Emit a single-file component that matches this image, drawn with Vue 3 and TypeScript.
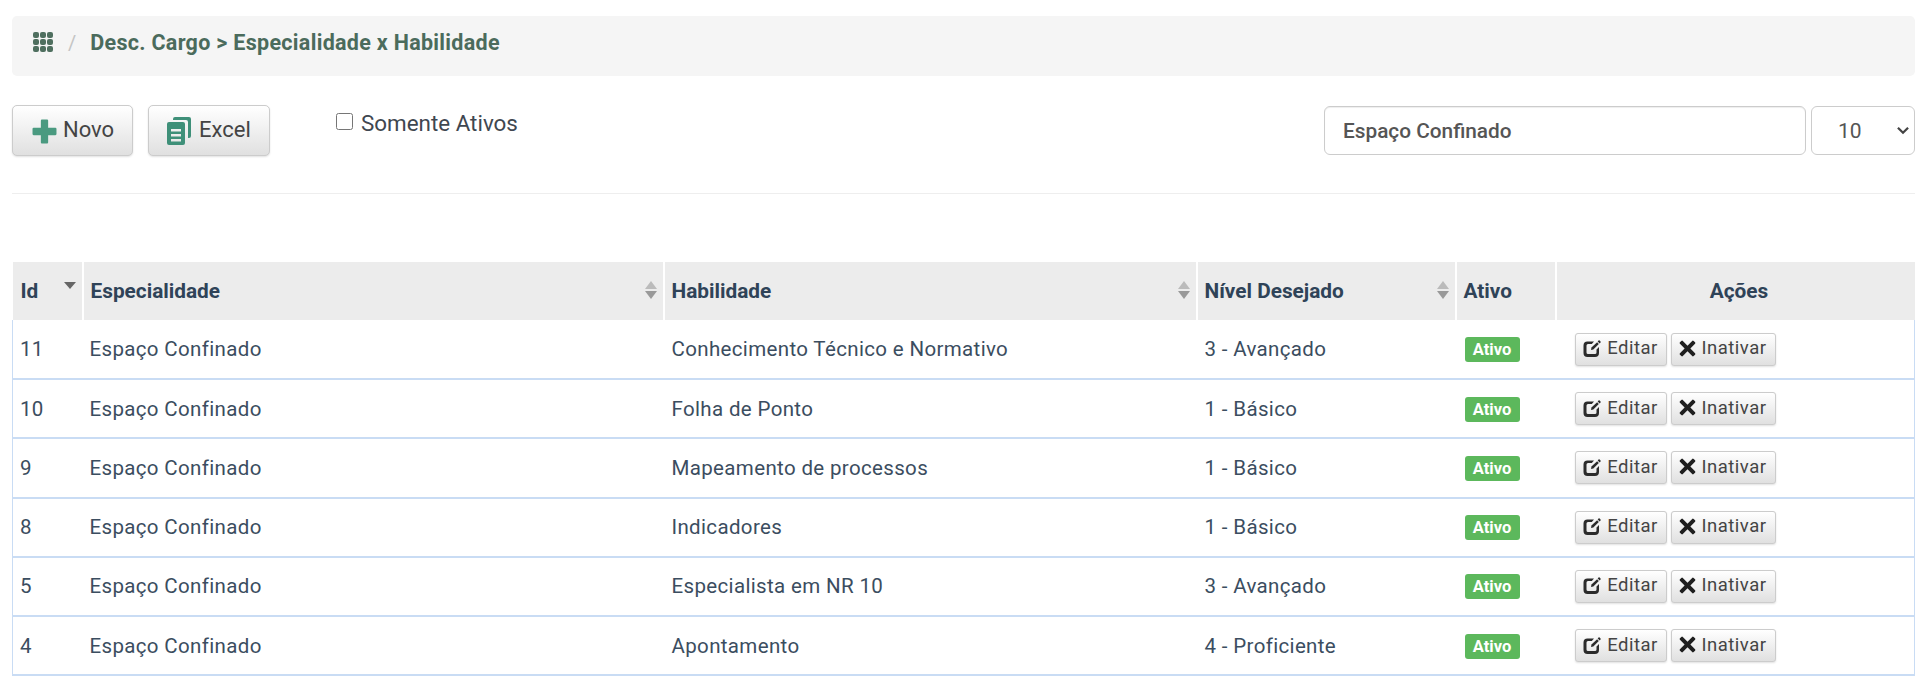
<script setup lang="ts">
interface Row { id: number; esp: string; hab: string; nivel: string }
const rows: Row[] = [
  { id: 11, esp: 'Espaço Confinado', hab: 'Conhecimento Técnico e Normativo', nivel: '3 - Avançado' },
  { id: 10, esp: 'Espaço Confinado', hab: 'Folha de Ponto', nivel: '1 - Básico' },
  { id: 9, esp: 'Espaço Confinado', hab: 'Mapeamento de processos', nivel: '1 - Básico' },
  { id: 8, esp: 'Espaço Confinado', hab: 'Indicadores', nivel: '1 - Básico' },
  { id: 5, esp: 'Espaço Confinado', hab: 'Especialista em NR 10', nivel: '3 - Avançado' },
  { id: 4, esp: 'Espaço Confinado', hab: 'Apontamento', nivel: '4 - Proficiente' },
]
const sortable = [
  { label: 'Especialidade', cls: 'c-esp' },
  { label: 'Habilidade', cls: 'c-hab' },
  { label: 'Nível Desejado', cls: 'c-niv' },
]
const grid = [0, 1, 2].flatMap((y) => [0, 1, 2].map((x) => ({ x: x * 7, y: y * 7 })))
</script>

<template>
  <div class="page">
    <div class="crumb">
      <svg class="th" viewBox="0 0 20 20" aria-hidden="true">
        <rect v-for="(g, i) in grid" :key="i" :x="g.x" :y="g.y" width="6" height="6" rx="2" />
      </svg>
      <span class="sep">/</span>
      <span class="crumb-text">Desc. Cargo &gt; Especialidade x Habilidade</span>
    </div>

    <div class="toolbar">
      <button class="btn btn-main" type="button">
        <svg class="ico-plus" viewBox="0 0 24 24" aria-hidden="true">
          <path d="M8.5 1.5a1 1 0 0 1 1-1h5a1 1 0 0 1 1 1v7h7a1 1 0 0 1 1 1v5a1 1 0 0 1-1 1h-7v7a1 1 0 0 1-1 1h-5a1 1 0 0 1-1-1v-7h-7a1 1 0 0 1-1-1v-5a1 1 0 0 1 1-1h7z" />
        </svg>
        Novo
      </button>
      <button class="btn btn-main btn-excel" type="button">
        <svg class="ico-copy" viewBox="0 0 24 28" aria-hidden="true">
          <path d="M8 0h14a2 2 0 0 1 2 2v17a2 2 0 0 1-2 2h-1V5a2 2 0 0 0-2-2H6V2a2 2 0 0 1 2-2z" />
          <path fill-rule="evenodd" d="M2 5h14a2 2 0 0 1 2 2v19a2 2 0 0 1-2 2H2a2 2 0 0 1-2-2V7a2 2 0 0 1 2-2zm2 7v2.5h10V12zm0 5v2.5h10V17zm0 5v2.5h10V22z" />
        </svg>
        Excel
      </button>
      <label class="check">
        <input type="checkbox" />
        <span>Somente Ativos</span>
      </label>
      <div class="filters">
        <input class="search" type="text" value="Espaço Confinado" />
        <div class="size-wrap">
          <select class="size">
            <option>10</option>
            <option>25</option>
            <option>50</option>
          </select>
          <svg class="chev" viewBox="0 0 12 8" aria-hidden="true">
            <path d="M1.500 1.500 6 6l4.500-4.500" />
          </svg>
        </div>
      </div>
    </div>

    <hr class="rule" />

    <table class="grid">
      <thead>
        <tr>
          <th class="c-id">Id<span class="caret"></span></th>
          <th v-for="s in sortable" :key="s.label" :class="s.cls">
            {{ s.label }}
            <span class="sorter"><i class="up"></i><i class="down"></i></span>
          </th>
          <th class="c-ativo">Ativo</th>
          <th class="c-acoes">Ações</th>
        </tr>
      </thead>
      <tbody>
        <tr v-for="r in rows" :key="r.id">
          <td>{{ r.id }}</td>
          <td>{{ r.esp }}</td>
          <td>{{ r.hab }}</td>
          <td>{{ r.nivel }}</td>
          <td><span class="tag">Ativo</span></td>
          <td>
            <div class="actions">
              <button class="btn btn-xs" type="button">
                <svg class="ico-edit" viewBox="0 0 18 18" aria-hidden="true">
                  <path d="M4 2.500h6.500L8.300 5H4.500A1.500 1.500 0 0 0 3 6.500v7A1.500 1.500 0 0 0 4.500 15h7a1.500 1.500 0 0 0 1.500-1.500V10.500l2.500-2.500v6A4 4 0 0 1 11.500 18h-7.500A4 4 0 0 1 0 14V6.500A4 4 0 0 1 4 2.500z" />
                  <path d="M13.600 3.200 15.300 4.900 9.800 10.400 7.500 10.900 8 8.600z" />
                  <path d="M15 1.600a.8.800 0 0 1 1.100 0l.9.900a.8.800 0 0 1 0 1.100l-.8.800-2-2z" />
                </svg>
                Editar
              </button>
              <button class="btn btn-xs" type="button">
                <svg class="ico-x" viewBox="0 0 16 16" aria-hidden="true">
                  <path d="M3.600.9 8 5.300 12.400.9a1 1 0 0 1 1.400 0l1.300 1.300a1 1 0 0 1 0 1.400L10.700 8l4.400 4.400a1 1 0 0 1 0 1.400l-1.300 1.300a1 1 0 0 1-1.400 0L8 10.700l-4.400 4.400a1 1 0 0 1-1.400 0L.9 13.800a1 1 0 0 1 0-1.400L5.300 8 .9 3.600a1 1 0 0 1 0-1.400L2.200.9a1 1 0 0 1 1.400 0z" />
                </svg>
                Inativar
              </button>
            </div>
          </td>
        </tr>
      </tbody>
    </table>
  </div>
</template>

<style>
html, body { margin: 0; background: #fff; }
</style>

<style scoped>
.page {
  width: 1919px;
  height: 688px;
  box-sizing: border-box;
  padding: 16px 4px 0 12px;
  font-family: Roboto, "Liberation Sans", sans-serif;
  font-size: 17px;
  color: #3a4a5a;
  overflow: hidden;
}
.crumb {
  height: 60px;
  display: flex;
  align-items: center;
  gap: 14px;
  padding: 0 0 7px 21px;
  background: #f5f5f5;
  border-radius: 5px;
  box-sizing: border-box;
}
.th { width: 20px; height: 20px; fill: #4f6f5f; margin-bottom: 2px; }
.sep { color: #c4c4c4; font-size: 20px; margin: 0 0 0 1px; }
.crumb-text {
  color: #4b6b5c;
  font-size: 21.500px;
  font-weight: 700;
  letter-spacing: 0.3px;
}
.toolbar {
  display: flex;
  align-items: flex-start;
  margin-top: 29px;
  height: 51px;
}
.btn {
  font-family: inherit;
  color: #333;
  background-image: linear-gradient(to bottom, #fff 0, #e0e0e0 100%);
  border: 1px solid #ccc;
  box-shadow: 0 1px 2px rgba(0, 0, 0, 0.12);
  cursor: pointer;
  display: inline-flex;
  align-items: center;
}
.btn-main {
  height: 51px;
  width: 121px;
  box-sizing: border-box;
  border-radius: 5px;
  font-size: 22px;
  padding: 0 0 2px 19px;
  gap: 6px;
  color: #444;
}
.btn-excel { width: 122px; margin-left: 15px; gap: 8px; padding-left: 18px; }
.ico-plus { width: 25px; height: 25px; fill: #4a9a80; margin-top: 3px; }
.ico-copy { width: 24px; height: 30px; fill: #3f9079; margin-top: 3px; }
.check {
  display: flex;
  align-items: center;
  gap: 8px;
  margin: 0 0 0 66px;
  font-size: 22.400px;
  color: #3f4750;
  height: 36px;
}
.check input { width: 17px; height: 17px; margin: 0 0 3px; }
.filters {
  margin-left: auto;
  margin-top: 1px;
  display: flex;
  gap: 5px;
}
.search {
  width: 482px;
  height: 49px;
  box-sizing: border-box;
  border: 1px solid #ccc;
  border-radius: 6px;
  padding: 1px 18px 0;
  font-family: inherit;
  font-size: 20.800px;
  font-weight: 500;
  color: #555;
  background: #fff;
  box-shadow: inset 0 1px 1px rgba(0, 0, 0, 0.07);
  outline: none;
}
.size-wrap { position: relative; width: 104px; height: 49px; }
.size {
  appearance: none;
  width: 100%;
  height: 100%;
  box-sizing: border-box;
  border: 1px solid #ccc;
  border-radius: 6px;
  padding: 0 0 0 26px;
  font-family: inherit;
  font-size: 21px;
  color: #555;
  background: #fff;
}
.chev {
  position: absolute;
  right: 5px;
  top: 20px;
  width: 14px;
  height: 9px;
  fill: none;
  stroke: #444;
  stroke-width: 2;
  pointer-events: none;
}
.rule {
  border: 0;
  border-top: 1px solid #eee;
  margin: 37px 0 0;
}
.grid {
  margin-top: 68px;
  width: 1903px;
  border-collapse: collapse;
  table-layout: fixed;
}
thead tr { height: 58px; }
th {
  background: #ececec;
  color: #2f4358;
  font-size: 20.800px;
  font-weight: 700;
  text-align: left;
  padding: 0 0 0 7px;
  border-right: 2px solid #fff;
  position: relative;
  box-sizing: border-box;
}
th:last-child { border-right: 0; }
.c-id { width: 70px; padding-left: 8px; }
.c-esp { width: 581px; }
.c-hab { width: 533px; }
.c-niv { width: 259px; }
.c-ativo { width: 100px; }
.c-acoes { text-align: center; }
.caret {
  position: absolute;
  right: 6px;
  top: 20px;
  border-left: 6px solid transparent;
  border-right: 6px solid transparent;
  border-top: 7px solid #666;
}
.sorter {
  position: absolute;
  right: 6px;
  top: 19px;
  display: flex;
  flex-direction: column;
  gap: 2px;
}
.sorter i {
  display: block;
  border-left: 6px solid transparent;
  border-right: 6px solid transparent;
}
.sorter .up { border-bottom: 8px solid #bbb; }
.sorter .down { border-top: 8px solid #999; }
tbody tr { height: 59.200px; border-bottom: 2px solid #c9dcf4; }
tbody tr td:first-child { border-left: 1px solid #c9dcf4; }
tbody tr td:last-child { border-right: 1px solid #c9dcf4; }
td {
  padding: 0 0 0 7px;
  font-size: 20.500px;
  color: #3b4d60;
  letter-spacing: 0.35px;
}
td:nth-child(n + 3) { padding-left: 8px; }
.tag {
  display: inline-block;
  background: #5cb85c;
  color: #fff;
  font-size: 16.500px;
  font-weight: 700;
  line-height: 25px;
  width: 55px;
  margin-left: 1px;
  text-align: center;
  border-radius: 3px;
  letter-spacing: 0;
  vertical-align: middle;
}
.actions { display: flex; gap: 4px; margin-left: 11px; }
.btn-xs {
  height: 33px;
  box-sizing: border-box;
  border-radius: 3px;
  font-size: 18.500px;
  letter-spacing: 0.5px;
  padding: 0 0 2px;
  justify-content: center;
  gap: 5px;
  color: #444;
  width: 92px;
}
.btn-xs + .btn-xs { width: 105px; }
.ico-edit { width: 19px; height: 18px; fill: #2b2b2b; }
.ico-x { width: 17px; height: 17px; fill: #1f1f1f; }
</style>
